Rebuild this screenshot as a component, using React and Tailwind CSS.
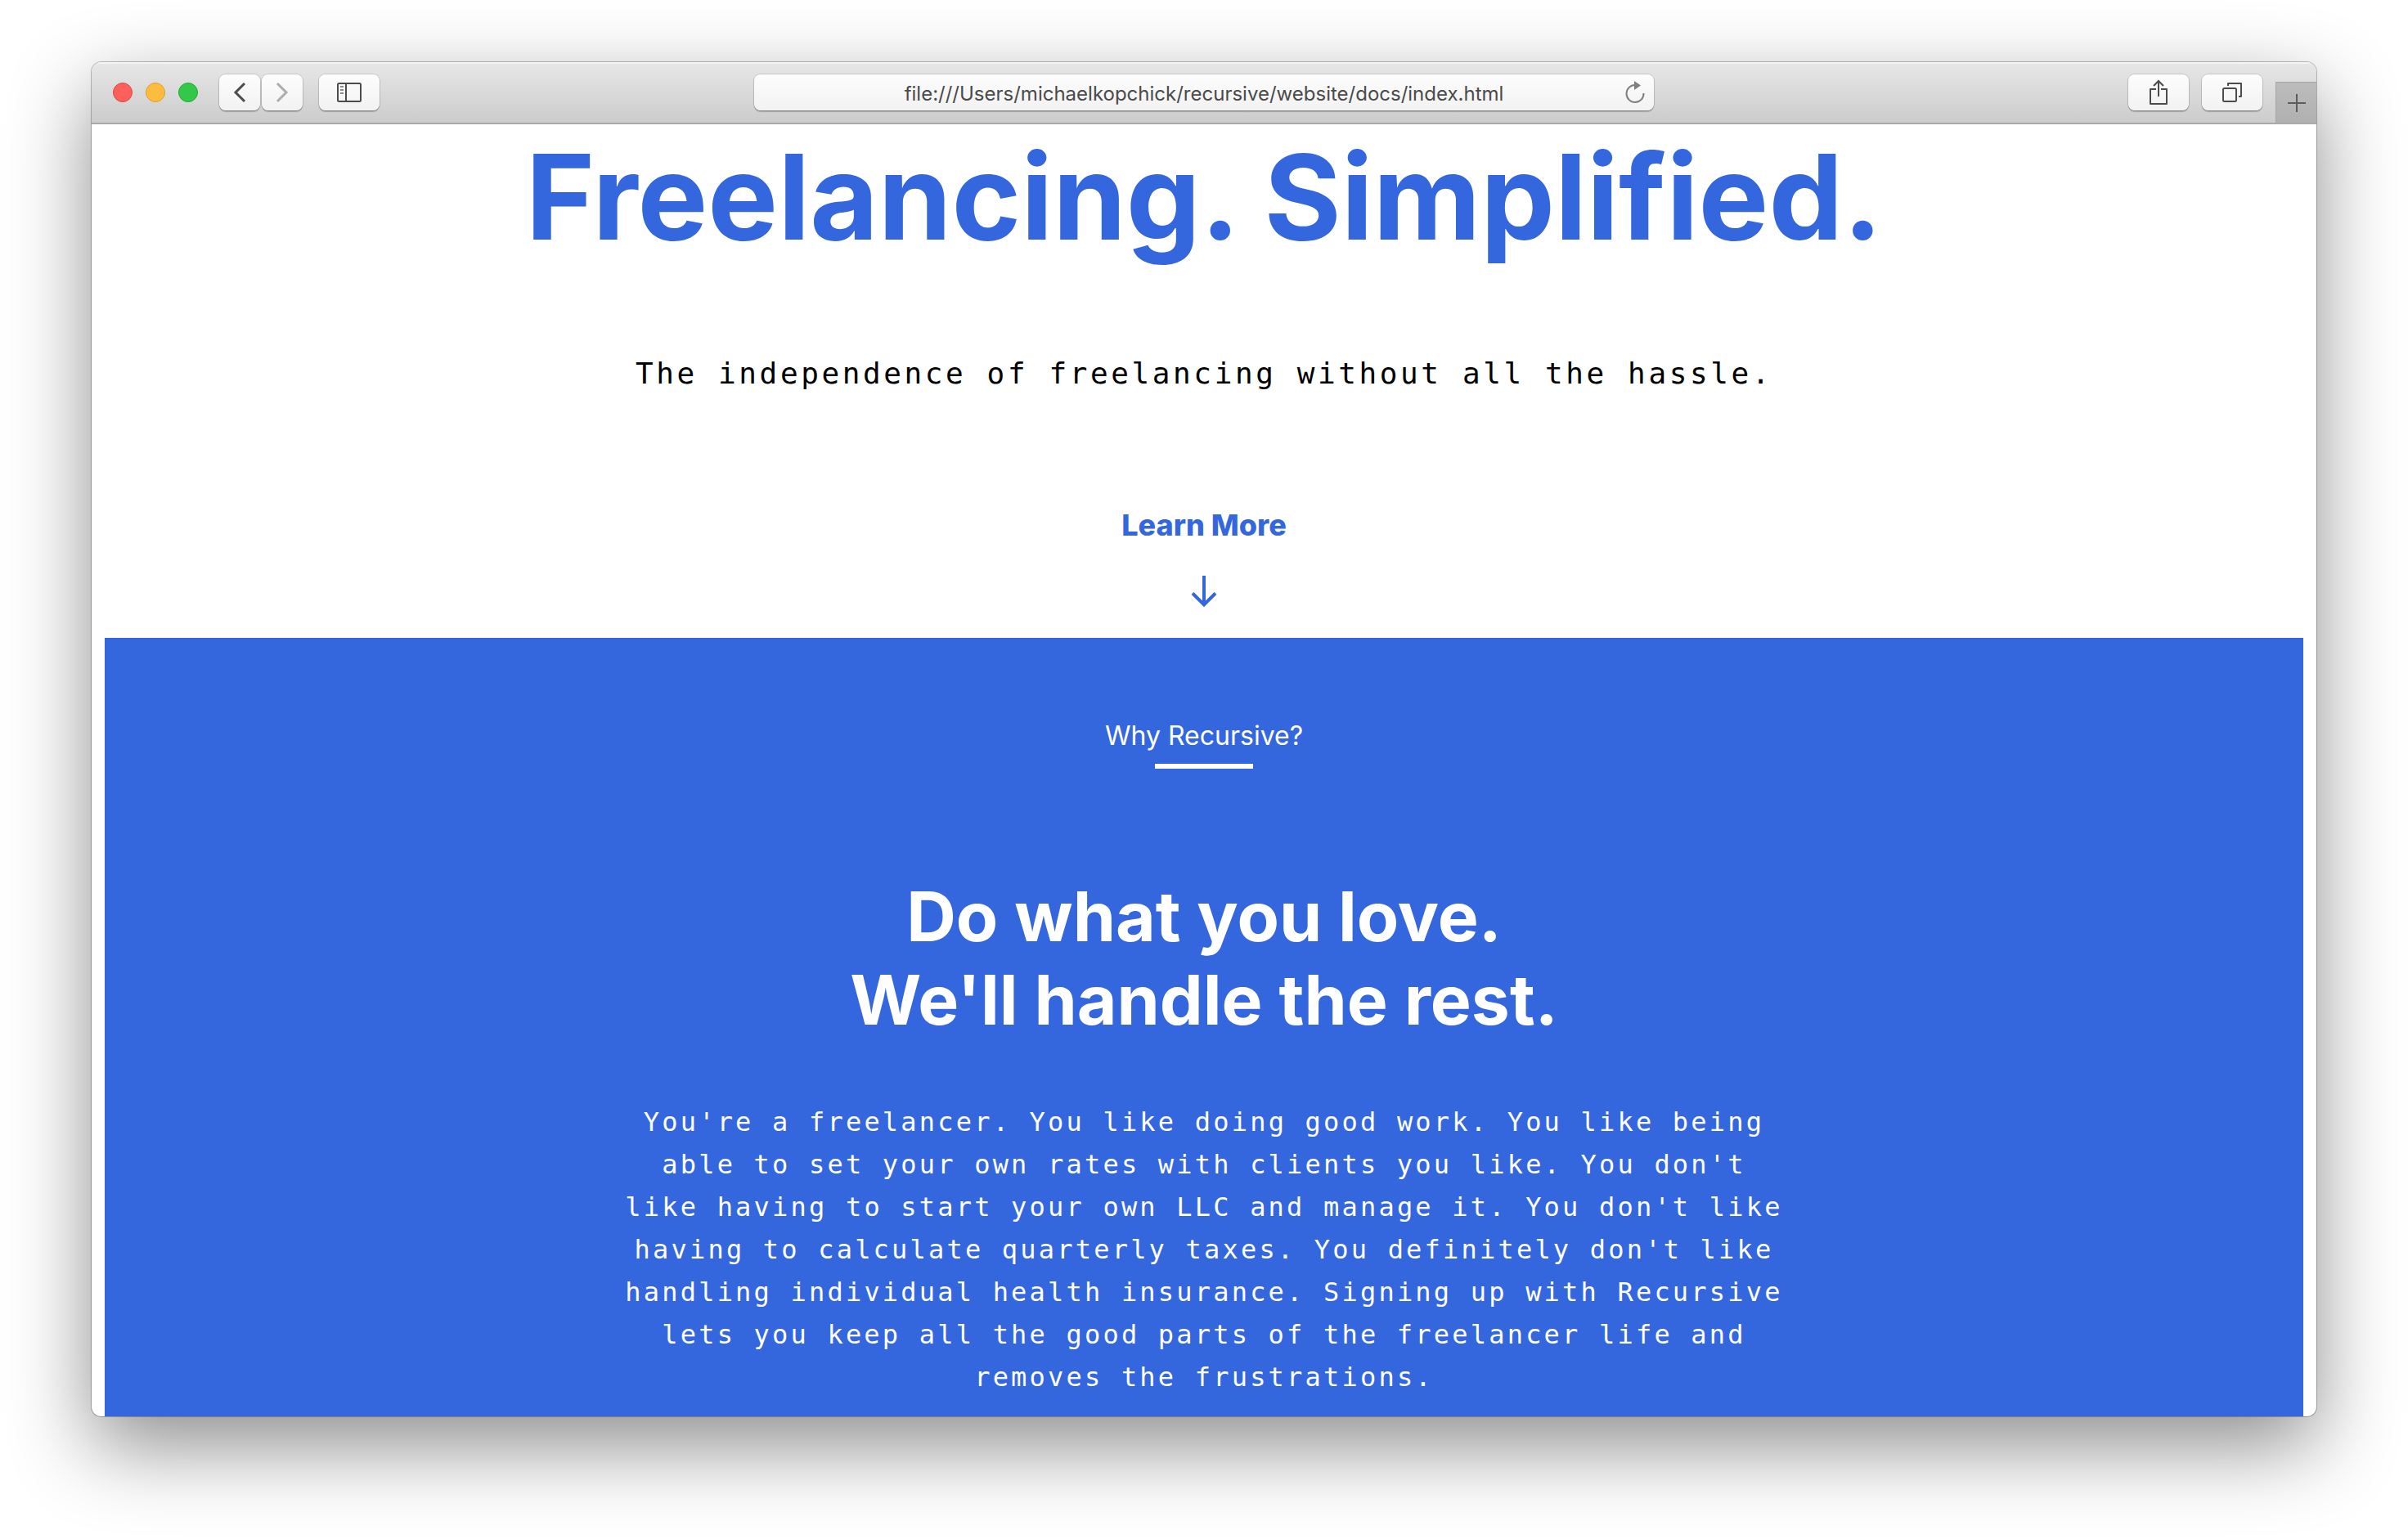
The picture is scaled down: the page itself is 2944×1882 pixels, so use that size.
const BTN =
  "flex h-11 items-center justify-center rounded-lg bg-linear-to-b from-[#fdfdfd] to-[#f2f2f2] text-[#4c4c4c] shadow-[0_0_0_1px_rgba(0,0,0,0.13),0_2px_1px_rgba(0,0,0,0.22)]";

function Toolbar() {
  return (
    <header className="grid h-[76px] grid-cols-[1fr_1100px_1fr] items-center border-b-2 border-[#a9a9a9] bg-linear-to-b from-[#e7e7e7] to-[#cccccc] shadow-[inset_0_2px_0_#f4f4f4]">
      <div className="flex items-center pl-[26px]">
        <div className="flex gap-4">
          <button aria-label="Close" className="size-6 rounded-full border border-[#e2463f] bg-[#fc605c]" />
          <button aria-label="Minimize" className="size-6 rounded-full border border-[#dfa023] bg-[#fdbc40]" />
          <button aria-label="Zoom" className="size-6 rounded-full border border-[#1dad2b] bg-[#34c84a]" />
        </div>
        <div className="ml-[26px] flex gap-[2px]">
          <button aria-label="Back" className={`${BTN} w-[50px]`}>
            <svg width="50" height="44" viewBox="0 0 50 44" fill="none" stroke="currentColor" strokeWidth="3">
              <path d="M31 11 20 22 31 33" />
            </svg>
          </button>
          <button aria-label="Forward" className={`${BTN} w-[50px]`}>
            <svg width="50" height="44" viewBox="0 0 50 44" fill="none" stroke="#adadad" strokeWidth="3">
              <path d="M19 11 30 22 19 33" />
            </svg>
          </button>
        </div>
        <button aria-label="Show sidebar" className={`${BTN} ml-5 w-[74px]`}>
          <svg width="30" height="24" viewBox="0 0 30 24" fill="none" stroke="currentColor" strokeWidth="2">
            <rect x="1" y="1" width="28" height="22" rx="1.5" />
            <path d="M11 1v22" />
            <path d="M4 5h4M4 9h4M4 13h4" stroke="#8a8a8a" />
          </svg>
        </button>
      </div>

      <div className="flex h-11 items-center rounded-lg bg-linear-to-b from-[#fdfdfd] to-[#f2f2f2] pt-[2px] pr-[10px] pl-9 shadow-[0_0_0_1px_rgba(0,0,0,0.13),0_2px_1px_rgba(0,0,0,0.22)]">
        <input
          aria-label="Address"
          defaultValue="file:///Users/michaelkopchick/recursive/website/docs/index.html"
          className="h-full min-w-0 flex-1 bg-transparent text-center font-[Inter,sans-serif] text-2xl text-[#4a4a4a] outline-none"
        />
        <button aria-label="Reload" className="text-[#7f7f7f]">
          <svg width="26" height="32" viewBox="0 0 26 32" fill="none" stroke="currentColor" strokeWidth="2">
            <path d="M13 6A10.500 10.500 0 1 0 23.500 16" />
            <path d="M12 1v11l8-5.500z" fill="currentColor" stroke="none" />
          </svg>
        </button>
      </div>

      <div className="flex items-center justify-end self-stretch">
        <button aria-label="Share" className={`${BTN} w-[74px]`}>
          <svg width="24" height="32" viewBox="0 0 24 32" fill="none" stroke="currentColor" strokeWidth="2">
            <path d="M9 12H2v18h20V12h-7" strokeLinejoin="round" />
            <path d="M12 21V2M6 8l6-6 6 6" />
          </svg>
        </button>
        <button aria-label="Show all tabs" className={`${BTN} ml-4 w-[74px]`}>
          <svg width="26" height="26" viewBox="0 0 26 26" fill="none" stroke="currentColor" strokeWidth="2">
            <rect x="2" y="8" width="16" height="16" rx="1.500" />
            <path d="M8 5V2h16v16h-3" strokeLinejoin="round" />
          </svg>
        </button>
        <button
          aria-label="New tab"
          className="ml-4 flex h-[50px] w-[50px] items-center justify-center self-end border-t border-l border-[#a6a6a6] bg-linear-to-b from-[#bcbcbc] to-[#b0b0b0] text-[#5c5c5c]"
        >
          <svg width="22" height="22" viewBox="0 0 22 22" stroke="currentColor" strokeWidth="2">
            <path d="M11 0v22M0 11h22" />
          </svg>
        </button>
      </div>
    </header>
  );
}

export default function App() {
  return (
    <div className="min-h-screen overflow-hidden bg-white px-28 pt-[76px] pb-36">
      <div className="overflow-hidden rounded-xl bg-white shadow-[0_0_0_1px_rgba(0,0,0,0.25),0_36px_100px_rgba(0,0,0,0.45)]">
        <Toolbar />
        <main className="px-4 font-[Inter,sans-serif]">
          <section className="flex flex-col items-center text-center text-[#3467de]">
            <h1 className="pt-[2px] text-[144px] leading-[174px] font-bold">Freelancing. Simplified.</h1>
            <p className="mt-[106px] font-['DejaVu_Sans_Mono',monospace] text-4xl leading-[46px] tracking-widest text-black">
              The independence of freelancing without all the hassle.
            </p>
            <a href="#why" className="mt-[140px] flex flex-col items-center text-4xl leading-[44px] font-extrabold">
              Learn More
              <svg className="mt-10 mb-[38px]" width="32" height="38" viewBox="0 0 32 38" fill="none" stroke="currentColor" strokeWidth="4">
                <path d="M16 0v35M2 21.500 16 35.500 30 21.500" />
              </svg>
            </a>
          </section>
          <section id="why" className="flex flex-col items-center bg-[#3467de] pt-[100px] pb-[22px] text-center text-white">
            <h3 className="text-[32px] leading-10">Why Recursive?</h3>
            <div className="mt-[14px] h-[6px] w-[120px] bg-white" />
            <h2 className="mt-[130px] text-[84px] leading-[102px] font-bold">
              Do what you love.
              <br />
              We'll handle the rest.
            </h2>
            <p className="mt-[72px] max-w-[1420px] font-['DejaVu_Sans_Mono',monospace] text-[32px] leading-[52px] tracking-widest">
              You're a freelancer. You like doing good work. You like being able to set your own rates with clients you
              like. You don't like having to start your own LLC and manage it. You don't like having to calculate
              quarterly taxes. You definitely don't like handling individual health insurance. Signing up with Recursive
              lets you keep all the good parts of the freelancer life and removes the frustrations.
            </p>
          </section>
        </main>
      </div>
    </div>
  );
}
